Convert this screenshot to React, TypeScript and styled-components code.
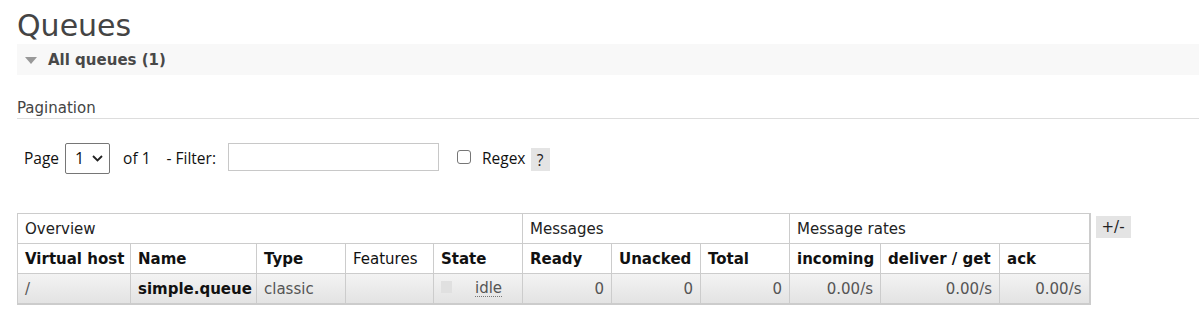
import React from "react";
import styled, { createGlobalStyle } from "styled-components";

const GlobalStyle = createGlobalStyle`
  html, body { margin: 0; padding: 0; background: #fff; }
  body {
    font-family: "DejaVu Sans", Verdana, sans-serif;
    font-size: 15px;
    color: #484848;
  }
`;

const Main = styled.div`
  padding: 0 0 0 17px;
`;

const Title = styled.h1`
  margin: 0;
  padding-top: 8px;
  height: 36px;
  font-size: 30px;
  line-height: 36px;
  font-weight: normal;
  color: #444;
`;

const SectionBar = styled.div`
  display: flex;
  align-items: center;
  gap: 11px;
  height: 31px;
  background: #f8f8f8;
  padding-left: 8px;
  font-weight: bold;
  color: #484848;
`;

const Triangle = styled.span`
  width: 0;
  height: 0;
  border-left: 6px solid transparent;
  border-right: 6px solid transparent;
  border-top: 7px solid #999;
  margin-top: 1px;
`;

const SubHeading = styled.div`
  margin-top: 24px;
  padding-bottom: 1px;
  border-bottom: 1px solid #ddd;
  color: #444;
  line-height: 18px;
`;

const FilterRow = styled.div`
  display: flex;
  align-items: center;
  margin-top: 23px;
  padding-left: 7px;
  height: 32px;
  font-family: "Open Sans", "Noto Sans", sans-serif;
  font-size: 15.5px;
  color: #111;
`;

const Label = styled.span<{ $ml?: number }>`
  margin-left: ${(p) => p.$ml ?? 0}px;
`;

const SelectBox = styled.div`
  display: flex;
  align-items: center;
  justify-content: space-between;
  box-sizing: border-box;
  width: 45px;
  height: 31px;
  margin-left: 6px;
  padding: 0 6px 0 9px;
  border: 1px solid #767676;
  border-radius: 2px;
  background: #fff;
  font-size: 16px;
`;

const TextInput = styled.div`
  box-sizing: border-box;
  width: 211px;
  height: 28px;
  margin-left: 12px;
  margin-top: -3px;
  border: 1px solid #c8c8c8;
  background: #fff;
`;

const CheckBox = styled.span`
  box-sizing: border-box;
  width: 14px;
  height: 14px;
  margin-left: 18px;
  margin-top: -3px;
  border: 1px solid #767676;
  border-radius: 3px;
  background: #fff;
`;

const HelpBox = styled.span`
  display: inline-flex;
  align-items: center;
  justify-content: center;
  width: 19px;
  height: 23px;
  margin-left: 5px;
  margin-top: 3px;
  background: #e4e4e4;
  color: #222;
`;

const TableWrap = styled.div`
  display: flex;
  align-items: flex-start;
  gap: 5px;
  margin-top: 39px;
`;

const List = styled.table`
  border-collapse: collapse;
  table-layout: fixed;
  width: 1072px;
  border-right: 2px solid #ccc;
  border-bottom: 2px solid #ccc;
`;

const GroupTh = styled.th`
  height: 29px;
  padding: 0 7px;
  border: 1px solid #ccc;
  text-align: left;
  font-weight: normal;
  color: #222;
  background: #fff;
`;

const Th = styled.th<{ $plain?: boolean }>`
  height: 29px;
  padding: 0 7px;
  border: 1px solid #ccc;
  text-align: left;
  font-weight: ${(p) => (p.$plain ? "normal" : "bold")};
  color: #111;
  background: #fff;
  white-space: nowrap;
`;

const Td = styled.td<{ $right?: boolean; $bold?: boolean }>`
  height: 29px;
  padding: 0 7px;
  border: 1px solid #ccc;
  text-align: ${(p) => (p.$right ? "right" : "left")};
  font-weight: ${(p) => (p.$bold ? "bold" : "normal")};
  color: ${(p) => (p.$bold ? "#111" : "#555")};
  white-space: nowrap;
`;

const DataRow = styled.tr`
  background: linear-gradient(#f3f3f3, #e2e2e2);
`;

const StateCell = styled.div`
  display: flex;
  align-items: center;
`;

const StateSquare = styled.span`
  width: 11px;
  height: 12px;
  background: #e0e0e0;
  margin-top: -4px;
`;

const StateText = styled.span`
  margin-left: 23px;
  border-bottom: 1px dotted #777;
  line-height: 16px;
`;

const PlusMinus = styled.span`
  display: inline-flex;
  align-items: center;
  justify-content: center;
  width: 35px;
  height: 22px;
  margin-top: 3px;
  background: #e4e4e4;
  color: #222;
`;

const widths = [113, 126, 89, 88, 89, 89, 89, 89, 91, 119, 90];

export default function App() {
  return (
    <>
      <GlobalStyle />
      <Main>
        <Title>Queues</Title>
        <SectionBar>
          <Triangle />
          <span>All queues (1)</span>
        </SectionBar>
        <SubHeading>Pagination</SubHeading>
        <FilterRow>
          <Label>Page</Label>
          <SelectBox>
            <span>1</span>
            <svg width="11" height="7" viewBox="0 0 11 7">
              <path d="M1 1 L5.5 5.5 L10 1" fill="none" stroke="#222" strokeWidth="1.8" />
            </svg>
          </SelectBox>
          <Label $ml={13}>of 1</Label>
          <Label $ml={16}>- Filter:</Label>
          <TextInput />
          <CheckBox />
          <Label $ml={11}>Regex</Label>
          <HelpBox>?</HelpBox>
        </FilterRow>
        <TableWrap>
          <List>
            <colgroup>
              {widths.map((w, i) => (
                <col key={i} style={{ width: w }} />
              ))}
            </colgroup>
            <thead>
              <tr>
                <GroupTh colSpan={5}>Overview</GroupTh>
                <GroupTh colSpan={3}>Messages</GroupTh>
                <GroupTh colSpan={3}>Message rates</GroupTh>
              </tr>
              <tr>
                <Th>Virtual host</Th>
                <Th>Name</Th>
                <Th>Type</Th>
                <Th $plain>Features</Th>
                <Th>State</Th>
                <Th>Ready</Th>
                <Th>Unacked</Th>
                <Th>Total</Th>
                <Th>incoming</Th>
                <Th>deliver / get</Th>
                <Th>ack</Th>
              </tr>
            </thead>
            <tbody>
              <DataRow>
                <Td>/</Td>
                <Td $bold>simple.queue</Td>
                <Td>classic</Td>
                <Td></Td>
                <Td>
                  <StateCell>
                    <StateSquare />
                    <StateText>idle</StateText>
                  </StateCell>
                </Td>
                <Td $right>0</Td>
                <Td $right>0</Td>
                <Td $right>0</Td>
                <Td $right>0.00/s</Td>
                <Td $right>0.00/s</Td>
                <Td $right>0.00/s</Td>
              </DataRow>
            </tbody>
          </List>
          <PlusMinus>+/-</PlusMinus>
        </TableWrap>
      </Main>
    </>
  );
}
